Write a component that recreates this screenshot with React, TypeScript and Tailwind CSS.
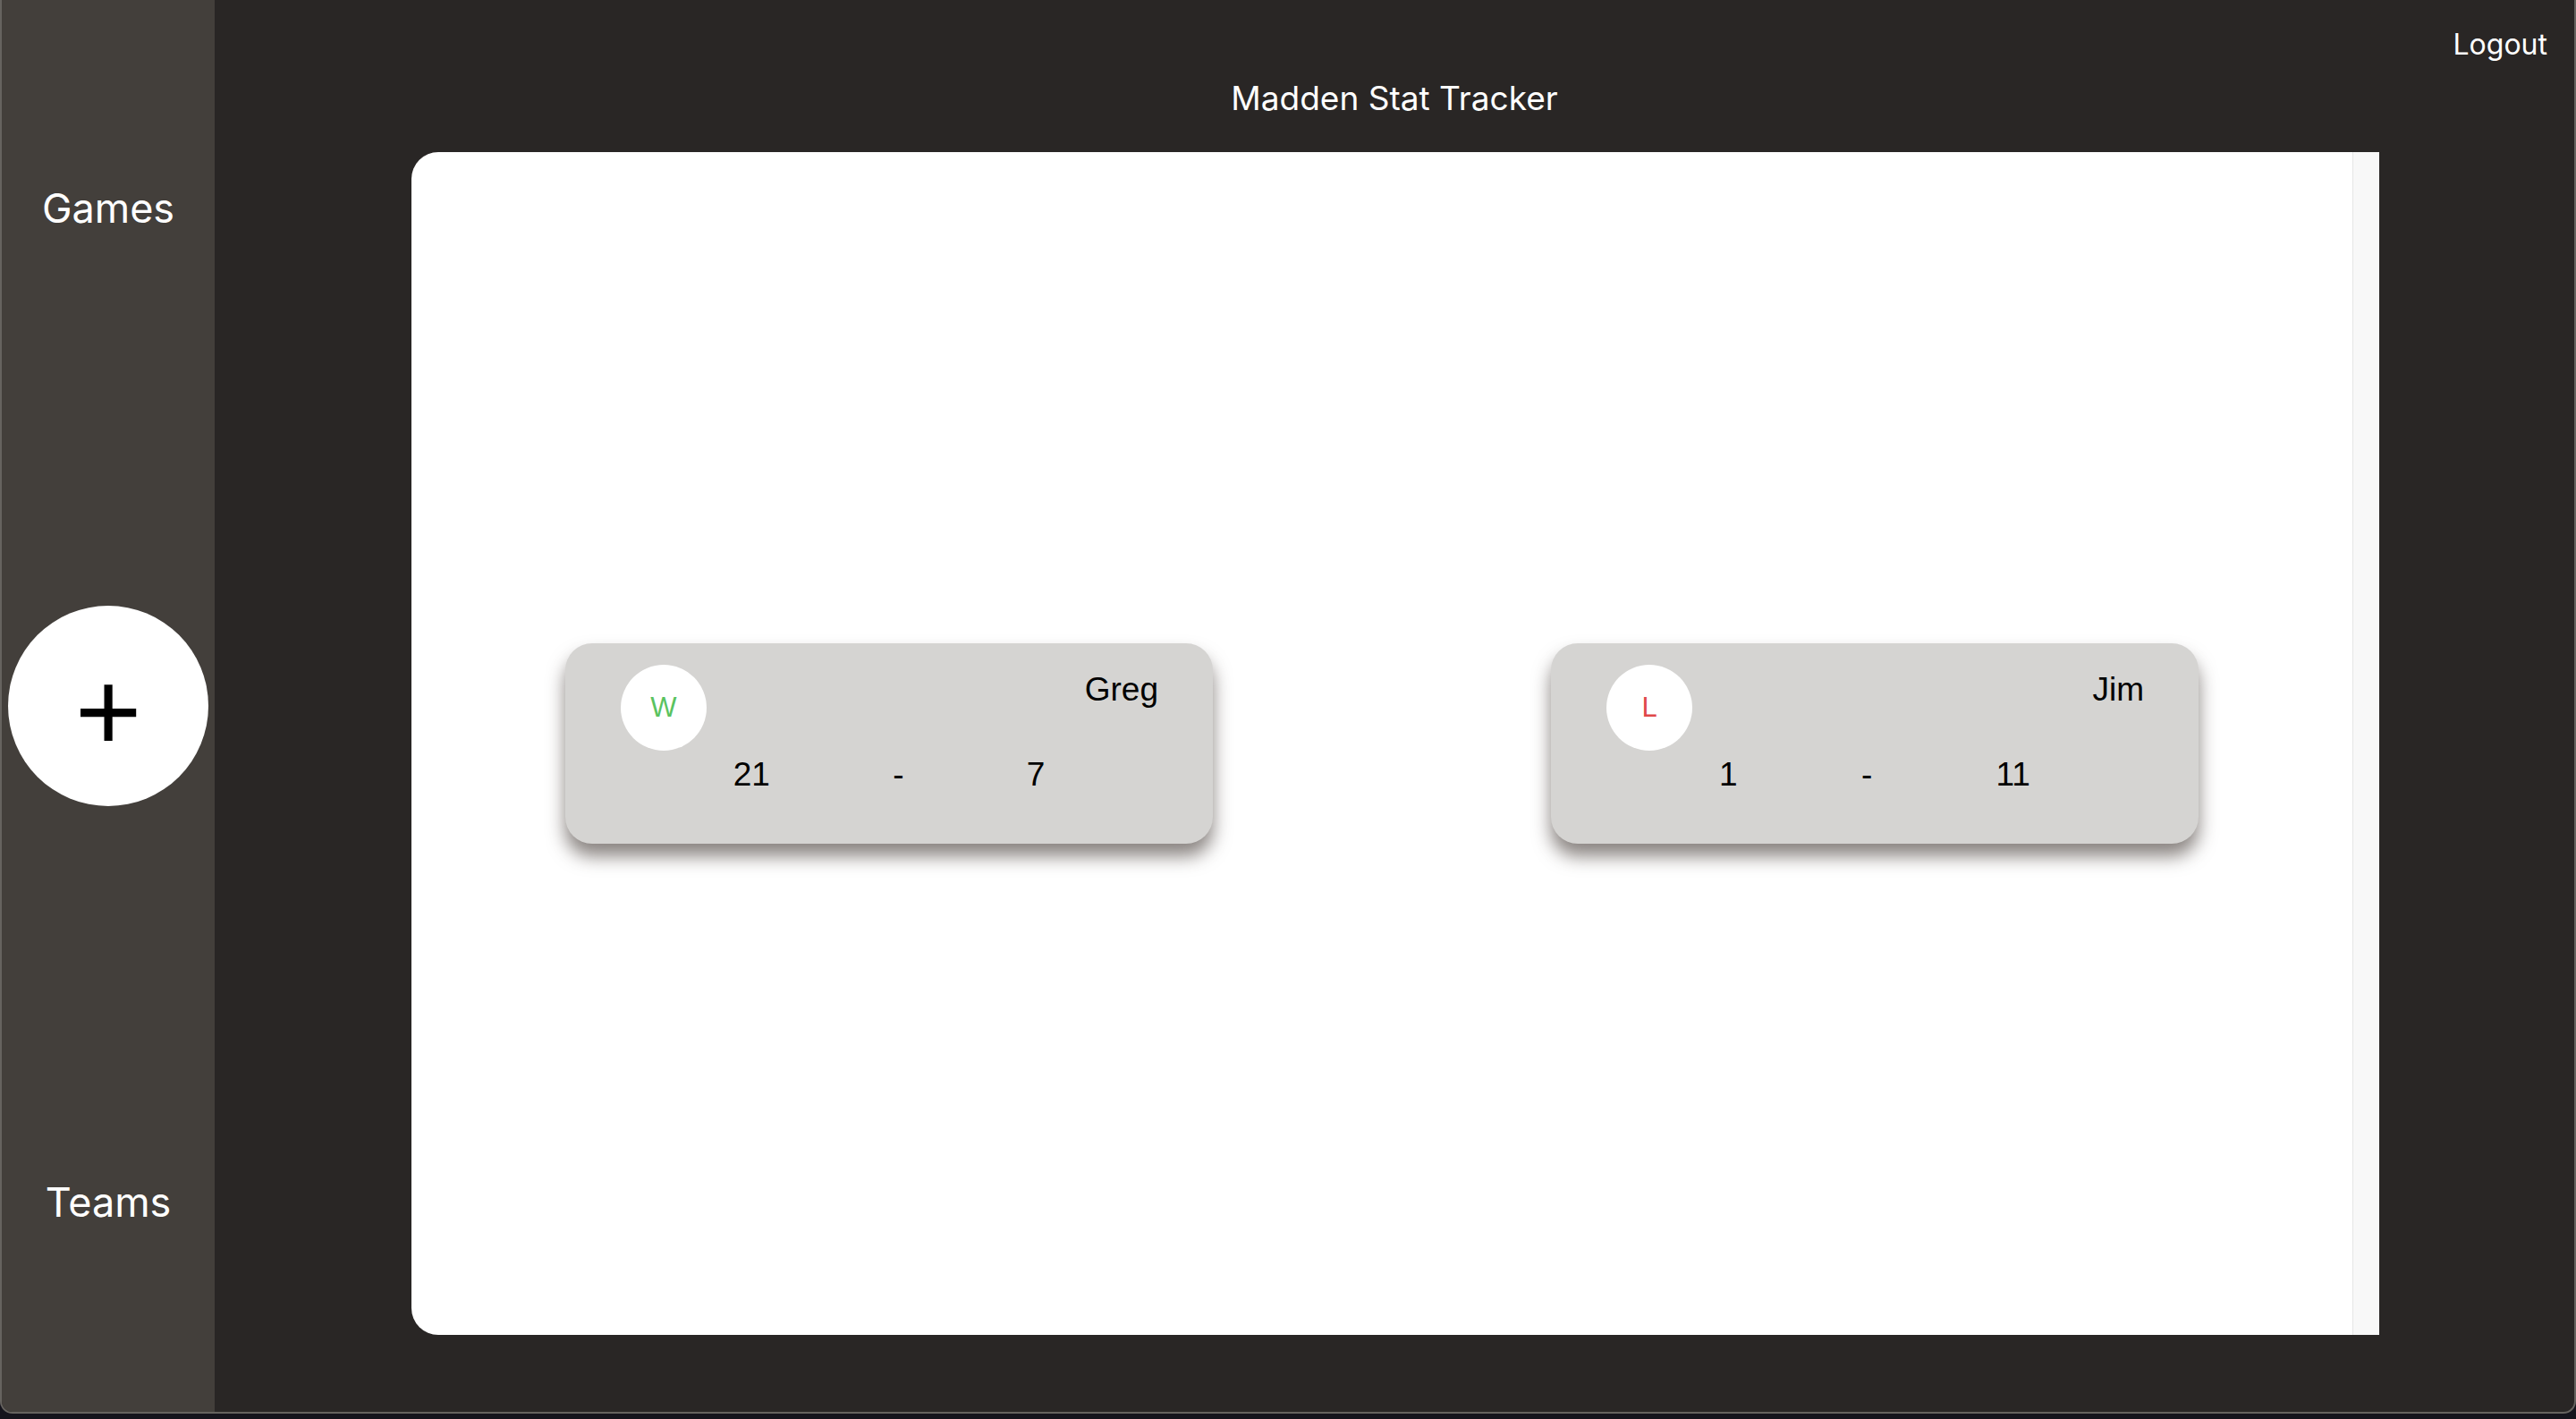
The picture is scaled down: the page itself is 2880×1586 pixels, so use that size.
import React from 'react';

interface Game {
  result: 'W' | 'L';
  player: string;
  score: number;
  opponentScore: number;
}

const games: Game[] = [
  { result: 'W', player: 'Greg', score: 21, opponentScore: 7 },
  { result: 'L', player: 'Jim', score: 1, opponentScore: 11 },
];

const uiFont = { fontFamily: 'Inter, "Noto Sans", sans-serif' };
const cardFont = { fontFamily: '"Liberation Sans", Arial, sans-serif' };

const GameCard: React.FC<{ game: Game }> = ({ game }) => {
  return (
    <div
      className="w-[724px] h-[224px] shrink-0 rounded-[30px] bg-[#d5d4d2] flex flex-col shadow-[0_14px_20px_rgba(60,50,45,0.6)]"
      style={cardFont}
    >
      {/* badge + player */}
      <div className="flex justify-between items-start pt-[24px] pl-[62px] pr-[61px]">
        <div className="w-[96px] h-[96px] rounded-full bg-white flex items-center justify-center">
          <span className={`text-[31px] leading-[34px] ${game.result === 'W' ? 'text-[#5ac35f]' : 'text-[#e04848]'}`}>
            {game.result}
          </span>
        </div>
        <p className="mt-[7px] text-[37px] leading-[42px] text-black">{game.player}</p>
      </div>

      {/* score */}
      <div className="flex justify-around px-[119px] mt-[6px] text-[37px] leading-[42px] text-black">
        <span>{game.score}</span>
        <span>-</span>
        <span>{game.opponentScore}</span>
      </div>
    </div>
  );
};

const App: React.FC = () => {
  return (
    <div className="w-[2880px] h-[1586px] bg-[#15141c] overflow-hidden">
      <div className="h-[1580px] flex rounded-b-[14px] border-x-2 border-b-2 border-[#66635f] bg-[#292625] overflow-hidden" style={uiFont}>
        {/* Sidebar */}
        <div className="w-[238px] h-full bg-[#433f3b] flex flex-col items-center justify-between pt-[206px] pb-[207px]">
          <p className="text-[45px] leading-[54px] text-white">Games</p>
          <button className="w-[224px] h-[224px] rounded-full bg-white flex items-center justify-center">
            <span className="text-[128px] leading-none text-black translate-y-[6px]" style={cardFont}>
              +
            </span>
          </button>
          <p className="text-[45px] leading-[54px] text-white">Teams</p>
        </div>

        {/* Main */}
        <div className="flex-1 flex flex-col">
          <div className="flex justify-end pt-[30px] pr-[30px]">
            <button className="text-[32px] leading-[40px] text-white">Logout</button>
          </div>
          <p className="mt-[18px] text-center text-[37px] leading-[44px] text-white">Madden Stat Tracker</p>

          <div className="mt-[38px] ml-[220px] mr-[218px] h-[1322px] flex bg-white rounded-l-[30px] overflow-hidden">
            <div className="flex-1 flex items-center justify-center gap-[378px]">
              {games.map((game, index) => (
                <GameCard key={index} game={game} />
              ))}
            </div>
            <div className="w-[30px] bg-[#f8f8f8] border-l border-[#e6e6e6]" />
          </div>
        </div>
      </div>
    </div>
  );
};

export default App;
